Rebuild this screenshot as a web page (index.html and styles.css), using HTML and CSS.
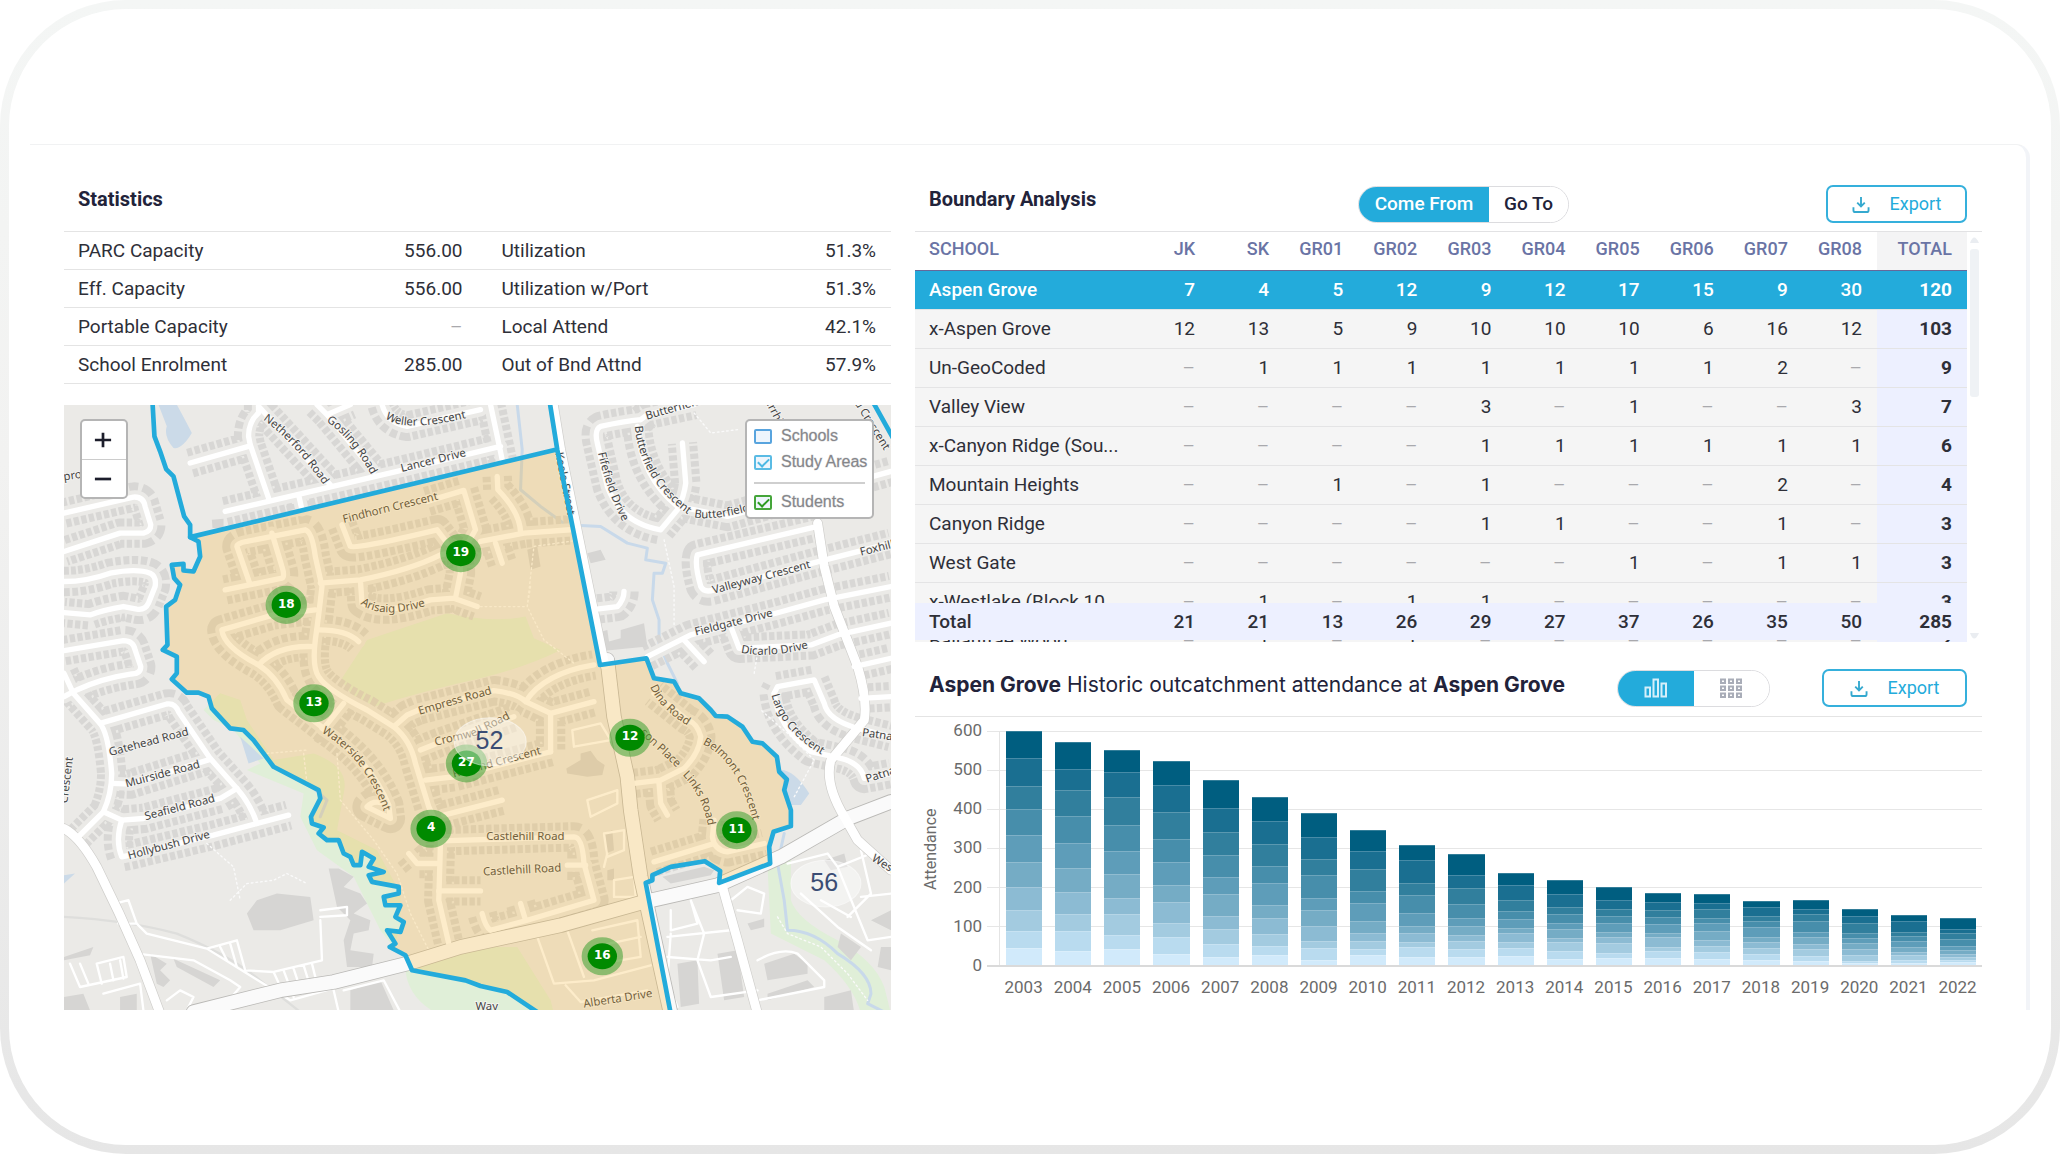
FILE: index.html
```html
<!DOCTYPE html>
<html lang="en">
<head>
<meta charset="utf-8">
<meta name="viewport" content="width=device-width, initial-scale=1">
<title>Boundary Analysis</title>
<link rel="stylesheet" href="styles.css">
</head>
<body>
<div class="frame">
<div class="screen">
<main class="card">

<section class="column">
  <header class="panel-head"><h2>Statistics</h2></header>
  <table class="stats">
    <tbody>
      <tr><th scope="row">PARC Capacity</th><td>556.00</td><th scope="row">Utilization</th><td>51.3%</td></tr>
      <tr><th scope="row">Eff. Capacity</th><td>556.00</td><th scope="row">Utilization w/Port</th><td>51.3%</td></tr>
      <tr><th scope="row">Portable Capacity</th><td><i>–</i></td><th scope="row">Local Attend</th><td>42.1%</td></tr>
      <tr><th scope="row">School Enrolment</th><td>285.00</td><th scope="row">Out of Bnd Attnd</th><td>57.9%</td></tr>
    </tbody>
  </table>

  <div class="map">
    <svg class="map-canvas" viewBox="12 15 2478 1815" preserveAspectRatio="xMidYMid slice" role="img" aria-label="Street map with study areas">
      <defs>
        <g id="streets">
          <path d="M12 340L220 292Q250 290 255 320L272 375Q272 395 250 400L180 400L12 455"/>
          <path d="M12 545Q80 545 150 520Q230 505 270 520Q290 530 285 560L265 610Q255 632 230 628L190 620Q130 630 90 645L12 638"/>
          <path d="M12 752L190 722Q220 722 225 750L242 800Q242 822 215 822L170 830Q80 850 12 890"/>
          <path d="M12 820L40 880L120 970Q145 1000 155 1120Q155 1180 130 1235L50 1315"/>
          <path d="M120 970L320 912Q345 908 355 935L450 1075L530 1165Q570 1210 590 1270"/>
          <path d="M155 1150L210 1152L450 1078M130 1235L185 1260L250 1255L480 1195L530 1165"/>
          <path d="M185 1260Q165 1320 185 1370L210 1365L460 1305L685 1245"/>
          <path d="M595 15L595 40Q565 65 565 110L570 135L625 295M390 190L565 140M595 20L810 255M770 15L800 45L940 215M800 45L870 15"/>
          <path d="M495 335L1010 215L1320 140M965 15Q980 70 1040 80L1260 30M715 285L725 330M1290 15L1325 180"/>
          <path d="M495 570L665 535Q675 530 665 500L635 400M570 555L530 440Q530 430 560 425L735 390Q755 395 765 470L785 560Q775 650 765 720Q755 800 775 830Q800 870 920 930L1000 980Q1050 1020 1065 1090L1105 1220Q1140 1290 1140 1330L1135 1500L1165 1630"/>
          <path d="M780 550L900 540Q1050 510 1140 465Q1200 450 1200 520L1185 595M900 540L905 610Q960 650 1110 600L1180 595L1250 620"/>
          <path d="M845 375L870 440Q880 450 1130 390L1160 430M1100 305L1210 272L1245 390L1205 460"/>
          <path d="M765 630L640 645L485 690Q490 740 595 795Q650 830 680 900L790 985L850 910M595 795Q650 735 760 740M775 690Q860 690 895 725"/>
          <path d="M1310 230L1312 270Q1380 340 1380 400M1260 425L1390 400L1530 390M1305 430L1325 490"/>
          <path d="M1000 980L1040 945L1075 930L1300 872Q1370 880 1395 905L1470 940L1600 905M1395 905Q1450 820 1600 795M1470 940L1470 1055"/>
          <path d="M1080 1050L1135 1028L1360 950M1095 1140L1180 1130L1470 1055M1150 1245L1325 1200"/>
          <path d="M785 985Q930 1080 985 1215L990 1255L920 1220Q940 1195 985 1215"/>
          <path d="M1140 1322L1540 1310Q1565 1310 1570 1390L1600 1500L1400 1560L1290 1590Q1275 1580 1265 1540M1135 1472L1260 1472M1520 1395L1575 1395M1380 1510L1395 1560M1045 1360L1070 1390L1135 1390"/>
          <path d="M1720 1150L1800 1140L1870 1105Q1915 1060 1920 1010Q1910 970 1880 960L1780 880M1795 1150L1800 1210L1820 1245"/>
          <path d="M1960 1260L1955 1310Q1960 1350 2000 1355L2110 1330M1780 1385L1960 1330"/>
          <path d="M1740 60Q1690 65 1620 80Q1600 90 1610 130L1640 260Q1680 370 1800 390L1850 330Q1870 290 1875 250L1865 130M1740 60L1760 45L1900 15"/>
          <path d="M1730 80Q1740 230 1850 320L2000 350L2490 215M2270 380L1910 465Q1900 490 1920 560Q1930 580 1960 570L2255 490L2490 430"/>
          <path d="M1760 770L1890 705L2145 640L2290 600L2490 560M1870 720L1930 785M2010 680L2035 745L2250 735L2330 705L2490 670"/>
          <path d="M2380 800L2490 775M1590 630L1670 620Q1690 600 1690 575M2140 880L2150 860L2260 840L2290 910Q2300 960 2390 985"/>
          <path d="M2140 880Q2150 980 2250 1055L2340 1075Q2400 1090 2410 1135L2490 1120M2390 985L2490 1010M2400 895L2490 890"/>
        </g>
        <g id="arterials">
          <path d="M12 1285Q60 1310 110 1400Q180 1540 240 1680L300 1840"/>
          <path d="M2270 370L2290 500L2320 620L2390 800Q2420 900 2410 960L2310 1080Q2290 1150 2350 1250L2390 1320L2490 1410"/>
          <path d="M1985 1460L2030 1620L2090 1840"/>
        </g>
        <path id="keele" d="M1640 780L1660 950L1700 1130L1710 1230L1740 1430L1830 1840"/>
        <path id="keele-north" d="M1478 15L1500 150L1632 795"/>
        <path id="finch" d="M400 1835L660 1770L820 1745L1040 1690L1200 1640L1500 1575L1750 1505L1970 1455L2160 1370L2360 1255L2490 1205"/>
        <path id="study-edge" d="M390 412L415 425L420 470L400 515L370 512L370 492L335 495L342 535L360 555L345 600L318 620L322 735L308 750L350 770L350 820L335 838L380 878L415 878L445 890L455 925L510 985L550 990L580 1020L640 1100L775 1170L780 1195L752 1250L755 1270L790 1282L775 1300L800 1320L835 1320L850 1360L870 1370L880 1395L900 1395L905 1355L940 1375L925 1400L970 1415L925 1425L935 1445L1015 1460L1015 1480L970 1490L975 1515L1020 1515L1005 1550L1030 1565L1020 1595L980 1590L1005 1630L988 1640L1035 1665L1055 1710L1215 1740L1260 1757L1340 1775L1430 1835"/>
        <path id="w1" d="M608 60Q700 125 800 270"/><path id="w2" d="M798 65Q880 120 945 250"/><path id="w3" d="M975 55Q1030 105 1260 45"/>
        <path id="w4" d="M900 612Q970 668 1150 600"/><path id="w5" d="M783 998Q930 1080 985 1280"/><path id="w6" d="M1125 1037L1240 1010L1400 930"/>
        <path id="w7" d="M1768 860Q1800 940 1930 1005"/><path id="w8" d="M1865 1125Q1930 1190 1945 1300"/><path id="w9" d="M1925 1032Q2050 1090 2090 1330"/>
        <path id="w10" d="M1722 80Q1740 260 1920 370"/><path id="w11" d="M1612 160Q1640 290 1710 410"/><path id="w12" d="M1900 352Q1960 367 2110 320"/>
        <path id="w13" d="M2132 885Q2160 1000 2310 1080"/><path id="w14" d="M2040 758Q2140 780 2290 730"/>
      </defs>

      <rect class="land" x="0" y="0" width="2520" height="1860"/>
      <path class="green" d="M845 835L920 720L1160 640Q1300 670 1395 650L1420 715L1500 750Q1400 800 1260 835Q1100 870 940 920Q860 890 845 835ZM430 930L480 880L540 900L560 960L640 1080L760 1060Q870 1100 850 1180L830 1290L950 1350L1020 1480L1020 1580L1000 1640L960 1590L880 1430L770 1350L720 1250L730 1180L560 1110L600 1090L520 990L460 960Z"/>
      <path class="green" d="M1035 1705L1260 1640L1370 1640L1470 1800L1480 1840L1130 1840Q1040 1790 1035 1705ZM2120 1400L2190 1370L2190 1500Q2210 1560 2330 1620Q2440 1680 2470 1760L2490 1840L2400 1840Q2380 1760 2290 1680L2130 1600Z"/>
      <path class="water" d="M295 15L350 15Q380 70 395 100Q365 150 340 145Q310 110 320 80ZM540 1010L610 1075L565 1090ZM2160 1110Q2200 1110 2245 1180L2220 1215L2180 1215ZM12 1425L45 1420L12 1450Z"/>
      <path class="creek" d="M1370 15L1385 150L1380 270L1440 320L1515 375L1620 380L1700 430L1760 445L1755 480L1815 490L1805 520L1780 520L1775 600L1795 660L1795 730L1820 790L1850 850M2170 1300L2150 1390L2170 1500L2180 1590Q2260 1590 2330 1660Q2430 1720 2430 1780L2420 1810L2470 1835M640 1100L760 1165L800 1200L780 1250"/>

      <use class="houses" href="#streets"/>
      <use class="yards" href="#streets"/>
      <path class="rail" d="M12 1550Q200 1560 350 1600Q500 1660 600 1740L720 1835"/>
      <path class="block" d="M560 1540L590 1500L650 1480L750 1490L760 1560L660 1590L580 1590ZM455 360L490 357L490 385L457 385ZM1580 460L1620 450L1635 480L1590 490ZM1605 700L1640 690L1645 725L1680 715L1680 690L1750 670L1760 740L1610 755ZM1517 1105L1560 1080L1560 1060L1590 1052L1610 1080L1632 1095L1625 1125L1580 1130L1520 1120ZM1400 450L1430 440L1440 500L1410 510Z"/>
      <path class="block" d="M805 1405L835 1405L880 1430L850 1460L900 1480L920 1510L880 1540L930 1560L925 1590L880 1600L870 1650L940 1660L935 1700L860 1700L850 1620L870 1560L830 1520ZM340 1675L480 1740L460 1760L350 1700ZM270 1660L320 1690L300 1710L330 1740L310 1760L290 1750ZM12 1670L100 1640L90 1665L12 1680ZM12 1790L70 1780L90 1830L12 1830ZM180 1790L230 1780L230 1830L180 1830ZM870 1770L960 1740L1000 1830L870 1830Z"/>
      <path class="block" d="M1630 1300L1655 1290L1660 1350L1635 1360ZM1640 1410L1660 1405L1660 1440L1640 1440ZM1805 1430L1930 1400L1960 1410L1950 1425L1830 1450ZM1850 1690L1910 1680L1915 1810L1860 1820ZM1970 1660L2030 1650L2050 1790L1990 1800ZM2110 1690L2200 1660L2240 1690L2240 1720L2120 1740ZM2120 1780L2240 1740L2260 1760L2120 1800ZM2060 1570L2110 1555L2110 1580L2070 1590ZM2340 1600L2400 1640L2370 1680L2330 1640ZM2430 1560L2490 1530L2490 1590ZM2290 1380L2350 1360L2360 1400L2310 1410ZM2290 1790L2370 1770L2380 1840L2290 1840ZM2460 1640L2490 1640L2490 1710L2450 1700Z"/>
      <path class="lanes" d="M165 1510L205 1500L230 1570L175 1570ZM230 1570L260 1600L440 1645L530 1620L555 1710L640 1715L785 1680L780 1560M440 1645L690 1800L870 1750M480 1640L500 1680M510 1630L530 1700M640 1715L670 1780M670 1710L700 1790M700 1705L725 1780M730 1695L755 1775M755 1690L775 1770M780 1530L860 1520L860 1545L780 1550M30 1690L60 1760L200 1730L190 1670L110 1690L125 1750M60 1690L85 1750M150 1690L160 1740M180 1680L190 1735M230 1660L400 1680L510 1740L540 1760L480 1830M130 1780L240 1750L250 1830M320 1800L360 1770L400 1790L380 1830M820 1770L835 1835M850 1770L970 1740L1020 1835"/>
      <path class="lanes" d="M1535 990L1620 970L1650 1020L1540 1040ZM1580 1200L1670 1170L1670 1210L1590 1250ZM1630 1300L1690 1290L1690 1350L1640 1370ZM1630 1400L1640 1360M1660 1440L1720 1430L1725 1490L1660 1490ZM1595 1590L1730 1560L1740 1670L1620 1690M1600 1640L1740 1610M1430 1610L1480 1750L1600 1740L1770 1695M1520 1590L1570 1730M1515 1755L1560 1805L1760 1770"/>
      <path class="lanes" d="M1830 1530L1830 1590L1910 1570L1890 1500M1820 1610L2010 1590M1820 1670L1950 1680L2010 1670M1890 1500L1930 1600L1910 1680L1950 1790L2090 1770M1830 1600L1820 1740L1850 1820M2000 1540L2010 1500L2060 1460L2110 1480L2100 1540L2030 1530M2090 1680Q2160 1640 2210 1660L2290 1740L2290 1760L2090 1800M2180 1390L2300 1360L2330 1400L2420 1620L2490 1610M2220 1480L2330 1580L2430 1650M2280 1500L2370 1550M2330 1400L2430 1360M2400 1490L2490 1480M2360 1550L2430 1480L2400 1350"/>
      <path class="trail" d="M1410 560L1400 620L1450 720L1540 790M1260 620L1400 620L1420 440L1560 420M1810 420L1840 560L1840 680M830 1060L840 1200L940 1320L1010 1420L1050 1540L1110 1660M730 1060L740 1150M510 1500L560 1450L640 1440L680 1420L740 1450M440 1330L520 1400L540 1500M2080 820L2090 760M1900 40L1950 100L2030 90M2200 1190L2260 1080L2180 1000L2100 930M620 1060L740 1050M2150 1550L2180 1600L2280 1640L2360 1720L2420 1800"/>
      <use class="casing-wide" href="#finch"/><use class="casing-wide" href="#keele"/><use class="casing-mid" href="#keele-north"/><use class="casing-mid" href="#arterials"/>
      <use class="roads" href="#streets"/>
      <use class="wide" href="#finch"/><use class="wide" href="#keele"/><use class="mid" href="#keele-north"/><use class="mid" href="#arterials"/>

      <g class="names">
        <text><textPath href="#w1">Netherford Road</textPath></text>
        <text><textPath href="#w2">Gosling Road</textPath></text>
        <text><textPath href="#w3">Weller Crescent</textPath></text>
        <text><textPath href="#w4">Arisaig Drive</textPath></text>
        <text><textPath href="#w5">Waterside Crescent</textPath></text>
        <text><textPath href="#w6">Cromwell Road</textPath></text>
        <text><textPath href="#w7">Dina Road</textPath></text>
        <text><textPath href="#w8">Links Road</textPath></text>
        <text><textPath href="#w9">Belmont Crescent</textPath></text>
        <text><textPath href="#w10">Butterfield Crescent</textPath></text>
        <text><textPath href="#w11">Fifefield Drive</textPath></text>
        <text><textPath href="#w12">Butterfield</textPath></text>
        <text><textPath href="#w13">Largo Crescent</textPath></text>
        <text><textPath href="#w14">Dicarlo Drive</textPath></text>
        <text transform="translate(1024 217) rotate(-14)">Lancer Drive</text>
        <text transform="translate(850 370) rotate(-14)">Findhorn Crescent</text>
        <text transform="translate(1077 944) rotate(-16)">Empress Road</text>
        <text transform="translate(150 1068) rotate(-15)">Gatehead Road</text>
        <text transform="translate(199 1162) rotate(-15)">Muirside Road</text>
        <text transform="translate(257 1260) rotate(-15)">Seafield Road</text>
        <text transform="translate(207 1378) rotate(-15)">Hollybush Drive</text>
        <text transform="translate(1180 1132) rotate(-15)">Rutland Crescent</text>
        <text transform="translate(1277 1320)">Castlehill Road</text>
        <text transform="translate(1268 1426) rotate(-3)">Castlehill Road</text>
        <text transform="translate(1570 1822) rotate(-9)">Alberta Drive</text>
        <text transform="translate(1738 1000) rotate(43)">son Place</text>
        <text transform="translate(1484 160) rotate(79)">Keele Street</text>
        <text transform="translate(1758 60) rotate(-16)">Butterfield</text>
        <text transform="translate(1958 582) rotate(-15)">Valleyway Crescent</text>
        <text transform="translate(2400 468) rotate(-14)">Foxhill</text>
        <text transform="translate(1905 707) rotate(-14)">Fieldgate Drive</text>
        <text transform="translate(2402 1008) rotate(8)">Patna Cres</text>
        <text transform="translate(2418 1148) rotate(-18)">Patna Cres</text>
        <text transform="translate(2430 1380) rotate(32)">Weston</text>
        <text transform="translate(2112 5) rotate(62)">arrhill</text>
        <text transform="translate(2380 10) rotate(58)">d Crescent</text>
        <text transform="translate(1245 1830)">Way</text>
        <text transform="translate(12 242) rotate(-8)">pro</text>
        <text transform="translate(22 1210) rotate(-83)">Crescent</text>
      </g>

      <path class="area" d="M390 412L415 425L420 470L400 515L370 512L370 492L335 495L342 535L360 555L345 600L318 620L322 735L308 750L350 770L350 820L335 838L380 878L415 878L445 890L455 925L510 985L550 990L580 1020L640 1100L775 1170L780 1195L752 1250L755 1270L790 1282L775 1300L800 1320L835 1320L850 1360L870 1370L880 1395L900 1395L905 1355L940 1375L925 1400L970 1415L925 1425L935 1445L1015 1460L1015 1480L970 1490L975 1515L1020 1515L1005 1550L1030 1565L1020 1595L980 1590L1005 1630L988 1640L1035 1665L1055 1710L1215 1740L1260 1757L1340 1775L1430 1835L1830 1835L1755 1448L1775 1440L1775 1425L1830 1400L1932 1383L1978 1412L1975 1448L2128 1390L2125 1340L2138 1295L2190 1278L2190 1230L2170 1170L2178 1138L2155 1115L2148 1070L2105 1030L2075 1025L2045 980L2000 950L1965 948L1950 930L1915 895L1860 880L1840 845L1780 835L1757 775L1618 795L1485 150Z"/>
      <use class="edge" href="#study-edge"/>
      <path class="edge" d="M277 5L283 110L300 155L318 208L340 230L372 350L390 375L390 412L1485 150M1467 5L1490 150L1618 795L1757 775L1780 835L1840 845L1860 880L1915 895L1950 930L1965 948L2000 950L2045 980L2075 1025L2105 1030L2148 1070L2155 1115L2178 1138L2170 1170L2190 1230L2190 1278L2138 1295L2125 1340L2128 1390L1975 1448L1978 1412L1932 1383L1830 1400L1775 1425L1775 1440L1755 1448L1830 1840M2432 0L2500 122"/>

      <g class="marker">
        <ellipse cx="1201" cy="460" rx="44" ry="39"/><text x="1201" y="468">19</text>
        <ellipse cx="678" cy="615" rx="44" ry="39"/><text x="678" y="623">18</text>
        <ellipse cx="761" cy="910" rx="44" ry="39"/><text x="761" y="918">13</text>
        <ellipse cx="1218" cy="1090" rx="44" ry="39"/><text x="1218" y="1098">27</text>
        <ellipse cx="1112" cy="1286" rx="44" ry="39"/><text x="1112" y="1294">4</text>
        <ellipse cx="1708" cy="1013" rx="44" ry="39"/><text x="1708" y="1021">12</text>
        <ellipse cx="2028" cy="1290" rx="44" ry="39"/><text x="2028" y="1298">11</text>
        <ellipse cx="1625" cy="1668" rx="44" ry="39"/><text x="1625" y="1676">16</text>
      </g>
      <g class="area-count">
        <ellipse cx="1289" cy="1025" rx="108" ry="72"/><text x="1287" y="1046">52</text>
        <ellipse cx="2295" cy="1450" rx="105" ry="70"/><text x="2290" y="1473">56</text>
      </g>
    </svg>

    <div class="zoom">
      <button type="button" aria-label="Zoom in"><svg viewBox="0 0 20 20"><path d="M10 2V18M1 10H19"/></svg></button>
      <button type="button" aria-label="Zoom out"><svg viewBox="0 0 20 20"><path d="M1 10H19"/></svg></button>
    </div>
    <div class="legend">
      <label><input type="checkbox" class="schools">Schools</label>
      <label><input type="checkbox" class="areas" checked>Study Areas</label>
      <hr>
      <label><input type="checkbox" class="students" checked>Students</label>
    </div>
  </div>
</section>

<section class="column">
  <header class="panel-head">
    <h2>Boundary Analysis</h2>
    <div class="actions">
      <div class="toggle direction">
        <button type="button" class="on">Come From</button>
        <button type="button">Go To</button>
      </div>
      <button type="button" class="export">
        <svg viewBox="0 0 18 18"><path d="M9 1V11M5 7L9 11L13 7M1 12V15Q1 17 3 17H15Q17 17 17 15V12"/></svg>Export
      </button>
    </div>
  </header>

  <div class="grid-area">
    <div class="grid-scroll">
      <table class="grid">
        <thead>
          <tr><th scope="col">SCHOOL</th><th scope="col">JK</th><th scope="col">SK</th><th scope="col">GR01</th><th scope="col">GR02</th><th scope="col">GR03</th><th scope="col">GR04</th><th scope="col">GR05</th><th scope="col">GR06</th><th scope="col">GR07</th><th scope="col">GR08</th><th scope="col">TOTAL</th></tr>
        </thead>
        <tbody>
          <tr class="selected"><th scope="row">Aspen Grove</th><td>7</td><td>4</td><td>5</td><td>12</td><td>9</td><td>12</td><td>17</td><td>15</td><td>9</td><td>30</td><td>120</td></tr>
          <tr><th scope="row">x-Aspen Grove</th><td>12</td><td>13</td><td>5</td><td>9</td><td>10</td><td>10</td><td>10</td><td>6</td><td>16</td><td>12</td><td>103</td></tr>
          <tr><th scope="row">Un-GeoCoded</th><td><i>–</i></td><td>1</td><td>1</td><td>1</td><td>1</td><td>1</td><td>1</td><td>1</td><td>2</td><td><i>–</i></td><td>9</td></tr>
          <tr><th scope="row">Valley View</th><td><i>–</i></td><td><i>–</i></td><td><i>–</i></td><td><i>–</i></td><td>3</td><td><i>–</i></td><td>1</td><td><i>–</i></td><td><i>–</i></td><td>3</td><td>7</td></tr>
          <tr><th scope="row">x-Canyon Ridge (Sou...</th><td><i>–</i></td><td><i>–</i></td><td><i>–</i></td><td><i>–</i></td><td>1</td><td>1</td><td>1</td><td>1</td><td>1</td><td>1</td><td>6</td></tr>
          <tr><th scope="row">Mountain Heights</th><td><i>–</i></td><td><i>–</i></td><td>1</td><td><i>–</i></td><td>1</td><td><i>–</i></td><td><i>–</i></td><td><i>–</i></td><td>2</td><td><i>–</i></td><td>4</td></tr>
          <tr><th scope="row">Canyon Ridge</th><td><i>–</i></td><td><i>–</i></td><td><i>–</i></td><td><i>–</i></td><td>1</td><td>1</td><td><i>–</i></td><td><i>–</i></td><td>1</td><td><i>–</i></td><td>3</td></tr>
          <tr><th scope="row">West Gate</th><td><i>–</i></td><td><i>–</i></td><td><i>–</i></td><td><i>–</i></td><td><i>–</i></td><td><i>–</i></td><td>1</td><td><i>–</i></td><td>1</td><td>1</td><td>3</td></tr>
          <tr><th scope="row">x-Westlake (Block 10</th><td><i>–</i></td><td>1</td><td><i>–</i></td><td>1</td><td>1</td><td><i>–</i></td><td><i>–</i></td><td><i>–</i></td><td><i>–</i></td><td><i>–</i></td><td>3</td></tr>
          <tr><th scope="row">Ballantrae Wood</th><td><i>–</i></td><td>1</td><td><i>–</i></td><td>1</td><td><i>–</i></td><td><i>–</i></td><td><i>–</i></td><td><i>–</i></td><td><i>–</i></td><td><i>–</i></td><td>2</td></tr>
        </tbody>
        <tfoot>
          <tr><th scope="row">Total</th><td>21</td><td>21</td><td>13</td><td>26</td><td>29</td><td>27</td><td>37</td><td>26</td><td>35</td><td>50</td><td>285</td></tr>
        </tfoot>
      </table>
    </div>
    <div class="scrollbar" aria-hidden="true">
      <svg viewBox="0 0 9 6"><path d="M0 6Q4 -5 9 6Z"/></svg>
      <div class="thumb"></div>
      <svg viewBox="0 0 9 6"><path d="M0 0Q4 11 9 0Z"/></svg>
    </div>
  </div>

  <header class="panel-head chart-head">
    <h2><b>Aspen Grove</b> Historic outcatchment attendance at <b>Aspen Grove</b></h2>
    <div class="actions">
      <div class="toggle view">
        <button type="button" class="on" aria-label="Chart view"><svg viewBox="0 0 24 20"><path d="M1.5 9.500H6V18.500H1.500ZM9.500 1.500H14V18.500H9.500ZM17.500 5.500H22V18.500H17.500Z"/></svg></button>
        <button type="button" aria-label="Table view"><svg viewBox="0 0 24 20"><path d="M2 1.500H6V5H2ZM10 1.500H14V5H10ZM18 1.500H22V5H18ZM2 8.500H6V12H2ZM10 8.500H14V12H10ZM18 8.500H22V12H18ZM2 15.500H6V19H2ZM10 15.500H14V19H10ZM18 15.500H22V19H18Z"/></svg></button>
      </div>
      <button type="button" class="export">
        <svg viewBox="0 0 18 18"><path d="M9 1V11M5 7L9 11L13 7M1 12V15Q1 17 3 17H15Q17 17 17 15V12"/></svg>Export
      </button>
    </div>
  </header>

  <div class="chart">
    <div class="axis-title">Attendance</div>
    <div class="scale"><span>600</span><span>500</span><span>400</span><span>300</span><span>200</span><span>100</span><span>0</span></div>
    <div class="plot">
      <div class="lines"><hr><hr><hr><hr><hr><hr><hr></div>
      <div class="bars" id="bars"></div>
      <div class="years" id="years"></div>
    </div>
  </div>
</section>

</main>
</div>
</div>
<script src="chart.js"></script>
</body>
</html>
```
FILE: styles.css
```css
* { box-sizing: border-box; }
body {
  margin: 0;
  background: #fff;
  color: #2e2f38;
  font: 19px/24px Roboto, sans-serif;
}
h2, hr, i { margin: 0; font-style: normal; }
button { font: inherit; cursor: pointer; margin: 0; }

.frame {
  min-height: 100vh;
  padding: 9px;
  border-radius: 126px;
  background: linear-gradient(#f4f6f5, #f2f2f1 40%, #e6e6e6);
  display: flex;
}
.screen {
  flex: 1;
  padding: 135px 21px 135px 21px;
  border-radius: 117px;
  background: #fff;
}
.card {
  display: grid;
  grid-template-columns: 827fr 1067fr;
  gap: 24px;
  padding: 0 44px 0 34px;
  border-top: 1px solid #f1f2f3;
  border-right: 4px solid #f2f4f8;
  border-top-right-radius: 14px;
}
.column { min-width: 0; }

.panel-head {
  display: flex;
  justify-content: space-between;
  align-items: flex-start;
  padding: 40px 15px 8px 14px;
  min-height: 86px;
}
.panel-head h2 {
  font-size: 20px;
  line-height: 28px;
  font-weight: 700;
  color: #22233a;
}
.actions { display: flex; align-items: flex-start; }

.stats { width: 100%; table-layout: fixed; border-spacing: 0; border-top: 1px solid #e4e4e4; }
.stats th, .stats td { height: 38px; padding: 0; border-bottom: 1px solid #e4e4e4; font-weight: 400; }
.stats th { text-align: left; padding-left: 14px; }
.stats td { text-align: right; padding-right: 15px; }
.stats th:nth-child(3) { padding-left: 24px; }
i { color: #a9a9ad; }

.map {
  position: relative;
  margin-top: 21px;
  aspect-ratio: 827 / 605;
  overflow: hidden;
}
.map-canvas { display: block; width: 100%; height: 100%; }
.map-canvas path, .map-canvas use { stroke-linecap: round; stroke-linejoin: round; fill: none; }
.map-canvas .land { fill: #ebeae7; }
.map-canvas .green { fill: #e0efd8; }
.map-canvas .water { fill: #cbdae8; }
.map-canvas .creek { stroke: #c8d9ea; stroke-width: 9; }
#streets path { stroke-linecap: inherit; }
.map-canvas .houses { stroke: #d8d7d5; stroke-width: 88; stroke-dasharray: 16 7; stroke-linecap: butt; }
.map-canvas .yards { stroke: #ebeae7; stroke-width: 40; }
.map-canvas .rail { stroke: #dededc; stroke-width: 7; }
.map-canvas .block { fill: #d6d5d3; }
.map-canvas .lanes { stroke: #fff; stroke-width: 7; }
.map-canvas .trail { stroke: #fafafa; stroke-width: 4; stroke-dasharray: 5 9; }
.map-canvas .roads { stroke: #fff; stroke-width: 16; }
.map-canvas .casing-wide { stroke: #bab9b6; stroke-width: 46; }
.map-canvas .casing-mid { stroke: #cfcecb; stroke-width: 31; }
.map-canvas .wide { stroke: #fafafa; stroke-width: 41; }
.map-canvas .mid { stroke: #fff; stroke-width: 27; }
.map-canvas .area { fill: rgba(248, 180, 44, .25); }
.map-canvas .edge { stroke: #23abdb; stroke-width: 14; }
.names text {
  font: 34px "Noto Sans", sans-serif;
  fill: #444;
  stroke: #f6f5f3;
  stroke-width: 5;
  paint-order: stroke;
}
.marker ellipse { fill: #008a00; stroke: rgba(60, 160, 50, .55); stroke-width: 36; paint-order: stroke; }
.marker text { font: 700 36px "DejaVu Sans", sans-serif; fill: #fff; text-anchor: middle; }
.area-count ellipse { fill: rgba(255, 255, 255, .42); stroke: rgba(255, 255, 255, .5); stroke-width: 3; }
.area-count text { font: 75px "Liberation Sans", sans-serif; fill: #3b4d74; text-anchor: middle; }

.zoom, .legend {
  position: absolute;
  top: 14px;
  background: #fff;
  border: 2px solid #b5b5b5;
  border-radius: 5px;
}
.zoom { left: 16px; width: 48px; }
.zoom button {
  display: flex;
  align-items: center;
  justify-content: center;
  width: 100%;
  height: 38px;
  padding: 0 2px 0 0;
  border: 0;
  background: none;
}
.zoom button + button { border-top: 1px solid #ccc; }
.zoom svg { width: 20px; height: 18px; stroke: #1c1d2b; stroke-width: 3; }
.legend {
  right: 17px;
  width: 129px;
  padding: 5px 7px;
  color: #85868a;
  font: 16px/20px "Liberation Sans", sans-serif;
}
.legend label { display: flex; align-items: center; gap: 9px; white-space: nowrap; -webkit-text-stroke: 1px rgba(133, 134, 138, .3); }
.legend label + label { margin-top: 6px; }
.legend hr { margin: 10px 0 8px; border: 0; border-top: 2px solid #cfcfcf; }
.legend input {
  appearance: none;
  flex: none;
  width: 18px;
  height: 15px;
  margin: 0;
  border: 2px solid #58a4de;
  border-radius: 2px;
  background: #eef5fc;
  display: grid;
  place-items: center;
  color: #4db8e4;
}
.legend .areas { border-color: #5abbe4; }
.legend .students { border-color: #45a53a; color: #2c9a22; }
.legend input:checked::after {
  content: "";
  width: 9px;
  height: 5px;
  margin-top: -2px;
  border: solid currentColor;
  border-width: 0 0 2px 2px;
  transform: rotate(-45deg);
}

.toggle {
  display: flex;
  height: 37px;
  margin-top: 1px;
  border: 1px solid #dcdcdf;
  border-radius: 19px;
  overflow: hidden;
}
.toggle button {
  display: flex;
  align-items: center;
  justify-content: center;
  padding: 0 0 2px;
  border: 0;
  background: #fff;
  color: #22233a;
  font-weight: 500;
}
.toggle .on { background: #23abdb; color: #fff; }
.direction { width: 211px; margin-right: 257px; }
.direction .on { flex: 0 0 130px; }
.direction button { flex: 1; }
.view { width: 153px; margin-right: 52px; }
.view button { flex: 1; }
.view svg { width: 24px; height: 20px; fill: none; stroke: #a9adb8; stroke-width: 2; }
.view .on svg { stroke: #d5effa; }
.export {
  display: flex;
  align-items: center;
  justify-content: center;
  gap: 20px;
  width: 141px;
  height: 38px;
  padding: 0;
  border: 2px solid #35b0dc;
  border-radius: 7px;
  background: #fff;
  color: #23abdb;
  font-size: 18px;
}
.chart-head .export { width: 145px; }
.export svg { width: 18px; height: 17px; fill: none; stroke: #35a9cf; stroke-width: 2; }

.grid-area { display: flex; height: 411px; border-top: 1px solid #e2e2e4; }
.grid-scroll { flex: 1; min-width: 0; overflow: hidden; }
.grid { width: 100%; table-layout: fixed; border-spacing: 0; }
.grid th, .grid td {
  height: 39px;
  padding: 0 15px 0 0;
  border-bottom: 1px solid #e4e4e5;
  background: #f5f5f5;
  text-align: right;
  font-weight: 400;
  white-space: nowrap;
}
.grid th:first-child { width: 21%; padding-left: 14px; padding-right: 0; text-align: left; overflow: hidden; }
.grid td:last-child, .grid th:last-child { width: 90px; font-weight: 700; }
.grid td:last-child { background: #edf0ff; }
.grid thead th {
  padding-bottom: 4px;
  background: #fff;
  border-color: #65699a;
  color: #6a74a5;
  font-size: 18px;
  font-weight: 500;
}
.grid thead th:last-child { background: #f4f4f5; font-weight: 500; }
.grid .selected th, .grid .selected td { background: #23abdb; color: #fff; font-weight: 500; }
.grid .selected td:last-child { font-weight: 700; }
.grid tfoot th, .grid tfoot td {
  position: sticky;
  bottom: 2px;
  height: 37px;
  border: 0;
  background: #edf0ff;
  font-weight: 500;
}
.scrollbar { width: 15px; display: flex; flex-direction: column; align-items: center; padding: 5px 0 3px 0; }
.scrollbar svg { width: 9px; height: 6px; fill: #eaedf1; flex: none; }
.scrollbar .thumb { width: 9px; height: 148px; margin: 6px 0 auto; border-radius: 3px; background: #eff2f5; }

.chart-head { padding-top: 27px; min-height: 75px; border-bottom: 1px solid #e4e4e4; }
.chart-head h2 { font-family: Inter, Roboto, sans-serif; line-height: 32px; font-size: 21px; font-weight: 400; white-space: nowrap; }

.chart { display: flex; padding-top: 14px; color: #6b6b6b; font-size: 17px; line-height: 20px; }
.axis-title { width: 30px; height: 236px; writing-mode: vertical-rl; transform: rotate(180deg); text-align: center; line-height: 32px; font-size: 16px; }
.scale { width: 37px; height: 255px; margin-top: -11px; display: flex; flex-direction: column; justify-content: space-between; text-align: right; }
.plot { flex: 1; position: relative; padding-left: 12px; margin-left: 5px; }
.lines { position: absolute; inset: 0 0 auto 0; height: 236px; display: flex; flex-direction: column; justify-content: space-between; }
.lines hr { border: 0; border-top: 1px solid #e6e6e6; }
.lines hr:last-child { border-top: 2px solid #dadada; }
.bars { position: relative; display: flex; height: 234px; align-items: flex-end; }
.bars::before { content: ""; position: absolute; left: 0; top: 0; bottom: 0; width: 1px; background: #e4e4e4; }
.bars > div { flex: 1; height: 100%; display: flex; flex-direction: column; justify-content: flex-end; padding: 0 6px 0 7px; }
.bars span { border-top: 1px solid rgba(255, 255, 255, .2); }
.years { display: flex; padding-top: 12px; height: 44px; }
.years span { flex: 1; text-align: center; }
.s0 { background: #005e80; } .s1 { background: #1a6f91; }
.s2 { background: #317f9d; } .s3 { background: #478eab; }
.s4 { background: #5e9db9; } .s5 { background: #75acc5; }
.s6 { background: #8cbbd3; } .s7 { background: #a3cbe0; }
.s8 { background: #b9dbef; } .s9 { background: #d1eafb; }
```
FILE: chart.js
```js
// Cumulative attendance per year, from the full bar down to the lowest band.
const attendance = {
  2003: [600, 530, 459, 400, 334, 264, 200, 140, 86, 43],
  2004: [571, 504, 449, 382, 314, 249, 188, 130, 86, 36],
  2005: [551, 494, 430, 359, 292, 234, 172, 130, 76, 41],
  2006: [523, 463, 392, 324, 265, 204, 161, 109, 72, 27],
  2007: [474, 404, 340, 283, 225, 183, 127, 92, 53, 21],
  2008: [432, 370, 311, 253, 211, 153, 121, 79, 48, 26],
  2009: [389, 328, 273, 230, 172, 140, 99, 62, 43, 14],
  2010: [347, 292, 246, 189, 160, 114, 82, 61, 41, 26],
  2011: [308, 269, 211, 179, 133, 100, 81, 59, 46, 21],
  2012: [284, 230, 197, 156, 120, 100, 76, 62, 40, 21],
  2013: [235, 204, 166, 138, 117, 94, 82, 60, 43, 22],
  2014: [219, 182, 150, 130, 108, 92, 70, 58, 37, 15],
  2015: [201, 168, 144, 126, 107, 86, 72, 57, 31, 18],
  2016: [184, 162, 140, 124, 105, 82, 71, 47, 35, 19],
  2017: [183, 160, 143, 120, 107, 88, 63, 50, 33, 15],
  2018: [165, 150, 127, 114, 98, 71, 60, 43, 28, 12],
  2019: [168, 144, 130, 114, 86, 71, 54, 41, 24, 11],
  2020: [143, 127, 109, 82, 70, 56, 40, 25, 11, 4],
  2021: [129, 112, 86, 75, 61, 46, 34, 25, 14, 4],
  2022: [121, 92, 82, 66, 49, 39, 29, 20, 14, 8]
};
const bars = document.getElementById("bars");
const years = document.getElementById("years");
for (const [year, tops] of Object.entries(attendance)) {
  const column = document.createElement("div");
  tops.forEach((top, band) => {
    const part = document.createElement("span");
    part.className = "s" + band;
    part.style.height = (top - (tops[band + 1] || 0)) / 6 + "%";
    column.append(part);
  });
  bars.append(column);
  const label = document.createElement("span");
  label.textContent = year;
  years.append(label);
}
```
